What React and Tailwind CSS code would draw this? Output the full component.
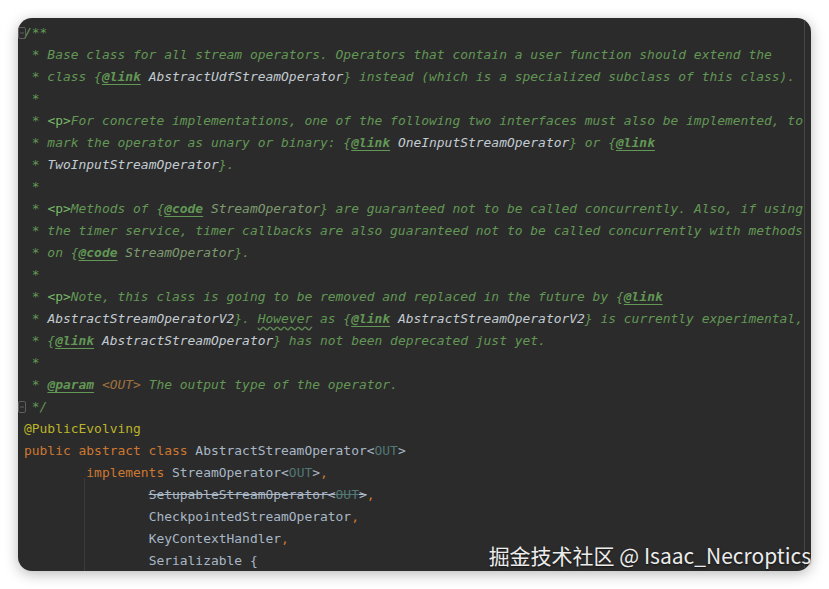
import React from "react";

// token colours (Darcula-ish)
const C = "text-[#629755] italic"; // doc comment
const TAG = "text-[#629755] italic font-bold underline underline-offset-[3px] decoration-[#629755]";
const HTML = "text-[#77b767]";
const REF = "text-[#c3cbd2] italic";
const CODE = "text-[#7d9a6e] italic";
const PARAM = "text-[#a0713f] italic";
const TYPO = "text-[#629755] italic underline decoration-wavy decoration-[#5f8a55] underline-offset-[3px]";
const KW = "text-[#cc7832]";
const ID = "text-[#a9b7c6]";
const TP = "text-[#507874]";
const ANN = "text-[#bbb529]";

const lines = [
  { fold: true, segs: [["/**", C]] },
  { segs: [[" * Base class for all stream operators. Operators that contain a user function should extend the", C]] },
  { segs: [[" * class {", C], ["@link", TAG], [" ", C], ["AbstractUdfStreamOperator", REF], ["} instead (which is a specialized subclass of this class).", C]] },
  { segs: [[" *", C]] },
  { segs: [[" * ", C], ["<p>", HTML], ["For concrete implementations, one of the following two interfaces must also be implemented, to", C]] },
  { segs: [[" * mark the operator as unary or binary: {", C], ["@link", TAG], [" ", C], ["OneInputStreamOperator", REF], ["} or {", C], ["@link", TAG]] },
  { segs: [[" * ", C], ["TwoInputStreamOperator", REF], ["}.", C]] },
  { segs: [[" *", C]] },
  { segs: [[" * ", C], ["<p>", HTML], ["Methods of {", C], ["@code", TAG], [" ", C], ["StreamOperator", CODE], ["} are guaranteed not to be called concurrently. Also, if using", C]] },
  { segs: [[" * the timer service, timer callbacks are also guaranteed not to be called concurrently with methods", C]] },
  { segs: [[" * on {", C], ["@code", TAG], [" ", C], ["StreamOperator", CODE], ["}.", C]] },
  { segs: [[" *", C]] },
  { segs: [[" * ", C], ["<p>", HTML], ["Note, this class is going to be removed and replaced in the future by {", C], ["@link", TAG]] },
  { segs: [[" * ", C], ["AbstractStreamOperatorV2", REF], ["}. ", C], ["However", TYPO], [" as {", C], ["@link", TAG], [" ", C], ["AbstractStreamOperatorV2", REF], ["} is currently experimental,", C]] },
  { segs: [[" * {", C], ["@link", TAG], [" ", C], ["AbstractStreamOperator", REF], ["} has not been deprecated just yet.", C]] },
  { segs: [[" *", C]] },
  { segs: [[" * ", C], ["@param", TAG], [" ", C], ["<OUT>", PARAM], [" The output type of the operator.", C]] },
  { fold: true, segs: [[" */", C]] },
  { segs: [["@PublicEvolving", ANN]] },
  { segs: [["public abstract class ", KW], ["AbstractStreamOperator<", ID], ["OUT", TP], [">", ID]] },
  { segs: [["        ", ID], ["implements ", KW], ["StreamOperator<", ID], ["OUT", TP], [">", ID], [",", KW]] },
  { segs: [["                ", ID], ["SetupableStreamOperator<", ID + " line-through"], ["OUT", TP + " line-through"], [">", ID + " line-through"], [",", KW]] },
  { segs: [["                ", ID], ["CheckpointedStreamOperator", ID], [",", KW]] },
  { segs: [["                ", ID], ["KeyContextHandler", ID], [",", KW]] },
  { segs: [["                ", ID], ["Serializable {", ID]] },
];

function Fold() {
  return (
    <svg width="8" height="12" viewBox="0 0 8 12" className="absolute left-[-6px] top-[5px]">
      <rect x="0.5" y="0.5" width="7" height="11" rx="1.5" fill="none" stroke="#5f5f5f" strokeWidth="1" />
      <line x1="2" y1="6" x2="6" y2="6" stroke="#5f5f5f" strokeWidth="1" />
    </svg>
  );
}

export default function App() {
  return (
    <div className="relative w-[829px] h-[589px] bg-white overflow-hidden">
      <div className="absolute left-[18px] top-[18px] w-[793px] h-[553px] rounded-[14px] bg-[#2b2b2b] overflow-hidden shadow-[0_3px_14px_rgba(0,0,0,0.28)]">
        {/* right margin guide */}
        <div className="absolute left-[786px] top-0 bottom-0 w-px bg-[#464646]" />
        {/* indent guide */}
        <div className="absolute left-[66px] top-[460px] bottom-0 w-px bg-[#3c3c3c]" />
        <div
          className="pt-[4px] pl-[6px] text-[12.95px] leading-[22px] whitespace-pre"
          style={{ fontFamily: '"DejaVu Sans Mono", "Liberation Mono", monospace' }}
        >
          {lines.map((l, i) => (
            <div key={i} className="relative h-[22px]">
              {l.fold && <Fold />}
              {l.segs.map(([t, cls], j) => (
                <span key={j} className={cls}>
                  {t}
                </span>
              ))}
            </div>
          ))}
        </div>
      </div>
      {/* watermark */}
      <div
        className="absolute right-[18px] top-[541px] text-[21px] leading-[28px] text-[#ececec] whitespace-nowrap [text-shadow:0_1px_2px_rgba(0,0,0,0.55)]"
        style={{ fontFamily: '"Noto Sans CJK SC", "Noto Sans", sans-serif' }}
      >
        掘金技术社区 @ Isaac_Necroptics
      </div>
    </div>
  );
}
